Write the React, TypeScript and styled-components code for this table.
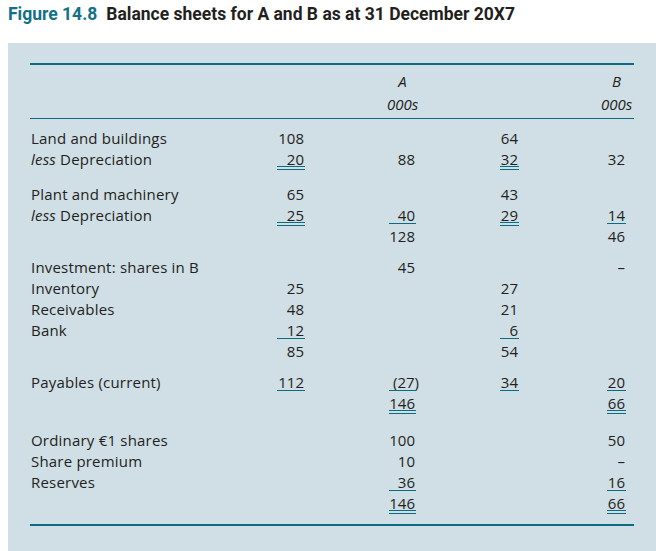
import React from "react";
import styled, { createGlobalStyle } from "styled-components";

const teal = "#0b6b80";
const ink = "#231f20";

type Line = "single" | "double";
type Cell = { v: string; line?: Line; hang?: boolean } | null;
type Row = { label?: React.ReactNode; cells: Cell[] };
type Group = { gap: number; rows: Row[] };

const n = (v: string, line?: Line, hang?: boolean): Cell => ({ v, line, hang });
const less = (
  <>
    <i>less</i> Depreciation
  </>
);

const groups: Group[] = [
  {
    gap: 9,
    rows: [
      { label: "Land and buildings", cells: [n("108"), null, n("64"), null] },
      { label: less, cells: [n("20", "double"), n("88"), n("32", "double"), n("32")] },
    ],
  },
  {
    gap: 14,
    rows: [
      { label: "Plant and machinery", cells: [n("65"), null, n("43"), null] },
      { label: less, cells: [n("25", "double"), n("40", "single"), n("29", "double"), n("14", "single")] },
      { cells: [null, n("128"), null, n("46")] },
    ],
  },
  {
    gap: 10,
    rows: [
      { label: "Investment: shares in B", cells: [null, n("45"), null, n("–")] },
      { label: "Inventory", cells: [n("25"), null, n("27"), null] },
      { label: "Receivables", cells: [n("48"), null, n("21"), null] },
      { label: "Bank", cells: [n("12", "single"), null, n("6", "single"), null] },
      { cells: [n("85"), null, n("54"), null] },
    ],
  },
  {
    gap: 10,
    rows: [
      {
        label: "Payables (current)",
        cells: [n("112", "single"), n("(27)", "single", true), n("34", "single"), n("20", "single")],
      },
      { cells: [null, n("146", "double"), null, n("66", "double")] },
    ],
  },
  {
    gap: 16,
    rows: [
      { label: "Ordinary €1 shares", cells: [null, n("100"), null, n("50")] },
      { label: "Share premium", cells: [null, n("10"), null, n("–")] },
      { label: "Reserves", cells: [null, n("36", "single"), null, n("16", "single")] },
      { cells: [null, n("146", "double"), null, n("66", "double")] },
    ],
  },
];

const cellWidths = [28, 27, 19, 19];

const App = () => {
  return (
    <>
      <GlobalStyle />
      <Page>
        <Title>
          <FigNo>Figure 14.8</FigNo>Balance sheets for A and B as at 31 December 20X7
        </Title>
        <Panel>
          <Rule />
          <Head>
            <HeadRow>
              <span />
              <span />
              <HeadCell $w={cellWidths[1]}>A</HeadCell>
              <span />
              <HeadCell $w={cellWidths[3]}>B</HeadCell>
            </HeadRow>
            <HeadRow>
              <span />
              <span />
              <HeadCell $w={cellWidths[1]}>000s</HeadCell>
              <span />
              <HeadCell $w={cellWidths[3]}>000s</HeadCell>
            </HeadRow>
          </Head>
          <Rule />
          <div>
            {groups.map((g, gi) => (
              <GroupBox key={gi} $gap={g.gap}>
                {g.rows.map((r, ri) => (
                  <TableRow key={ri}>
                    <Label>{r.label}</Label>
                    {r.cells.map((c, ci) => (
                      <Amount key={ci} $w={cellWidths[ci]} $line={c?.line}>
                        {c && <Figure $hang={c.hang}>{c.v}</Figure>}
                      </Amount>
                    ))}
                  </TableRow>
                ))}
              </GroupBox>
            ))}
          </div>
          <Rule $before={10} />
        </Panel>
      </Page>
    </>
  );
};
export default App;

const GlobalStyle = createGlobalStyle`
  body {
    margin: 0;
    background: #ffffff;
    color: ${ink};
    font-family: "Open Sans", "Noto Sans", sans-serif;
  }
`;

const Page = styled.div`
  padding-left: 8px;
  width: 648px;
`;

const Title = styled.h1`
  margin: 0;
  padding-top: 3px;
  font-family: Roboto, "Open Sans", sans-serif;
  font-weight: 700;
  font-size: 17.5px;
  line-height: 22px;
  color: ${ink};
`;

const FigNo = styled.span`
  color: #137186;
  margin-right: 9px;
`;

const Panel = styled.section`
  margin-top: 18px;
  background: #d0dee6;
  padding: 20px 22px 27px 22px;
`;

const Rule = styled.div<{ $before?: number }>`
  height: 1.5px;
  background: ${teal};
  margin-top: ${p => p.$before ?? 0}px;
`;

const grid = `
  display: grid;
  grid-template-columns: 247px 28px 111px 103px 107px;
`;

const Head = styled.div`
  padding: 5px 0 2px 0;
  font-style: italic;
  font-size: 15px;
`;

const HeadRow = styled.div`
  ${grid}
  line-height: 23px;
  height: 23px;
`;

const HeadCell = styled.div<{ $w: number }>`
  justify-self: end;
  width: ${p => p.$w}px;
  display: flex;
  justify-content: center;
  white-space: nowrap;
`;

const GroupBox = styled.div<{ $gap: number }>`
  margin-top: ${p => p.$gap}px;
`;

const TableRow = styled.div`
  ${grid}
  height: 21px;
  line-height: 21px;
  font-size: 15px;
`;

const Label = styled.div`
  padding-left: 1px;
  white-space: nowrap;
  letter-spacing: 0.2px;
  i {
    font-style: italic;
  }
`;

const Amount = styled.div<{ $w: number; $line?: Line }>`
  position: relative;
  justify-self: end;
  width: ${p => p.$w}px;
  text-align: right;
  white-space: nowrap;
  &::after {
    content: "";
    display: ${p => (p.$line ? "block" : "none")};
    position: absolute;
    left: 0;
    right: 0;
    bottom: ${p => (p.$line === "single" ? 2 : 0)}px;
    height: 1px;
    background: ${teal};
    box-shadow: ${p => (p.$line === "double" ? `0 -3px 0 ${teal}` : "none")};
  }
`;

const Figure = styled.span<{ $hang?: boolean }>`
  display: inline-block;
  padding-right: 1px;
  margin-right: ${p => (p.$hang ? -4 : 0)}px;
`;
